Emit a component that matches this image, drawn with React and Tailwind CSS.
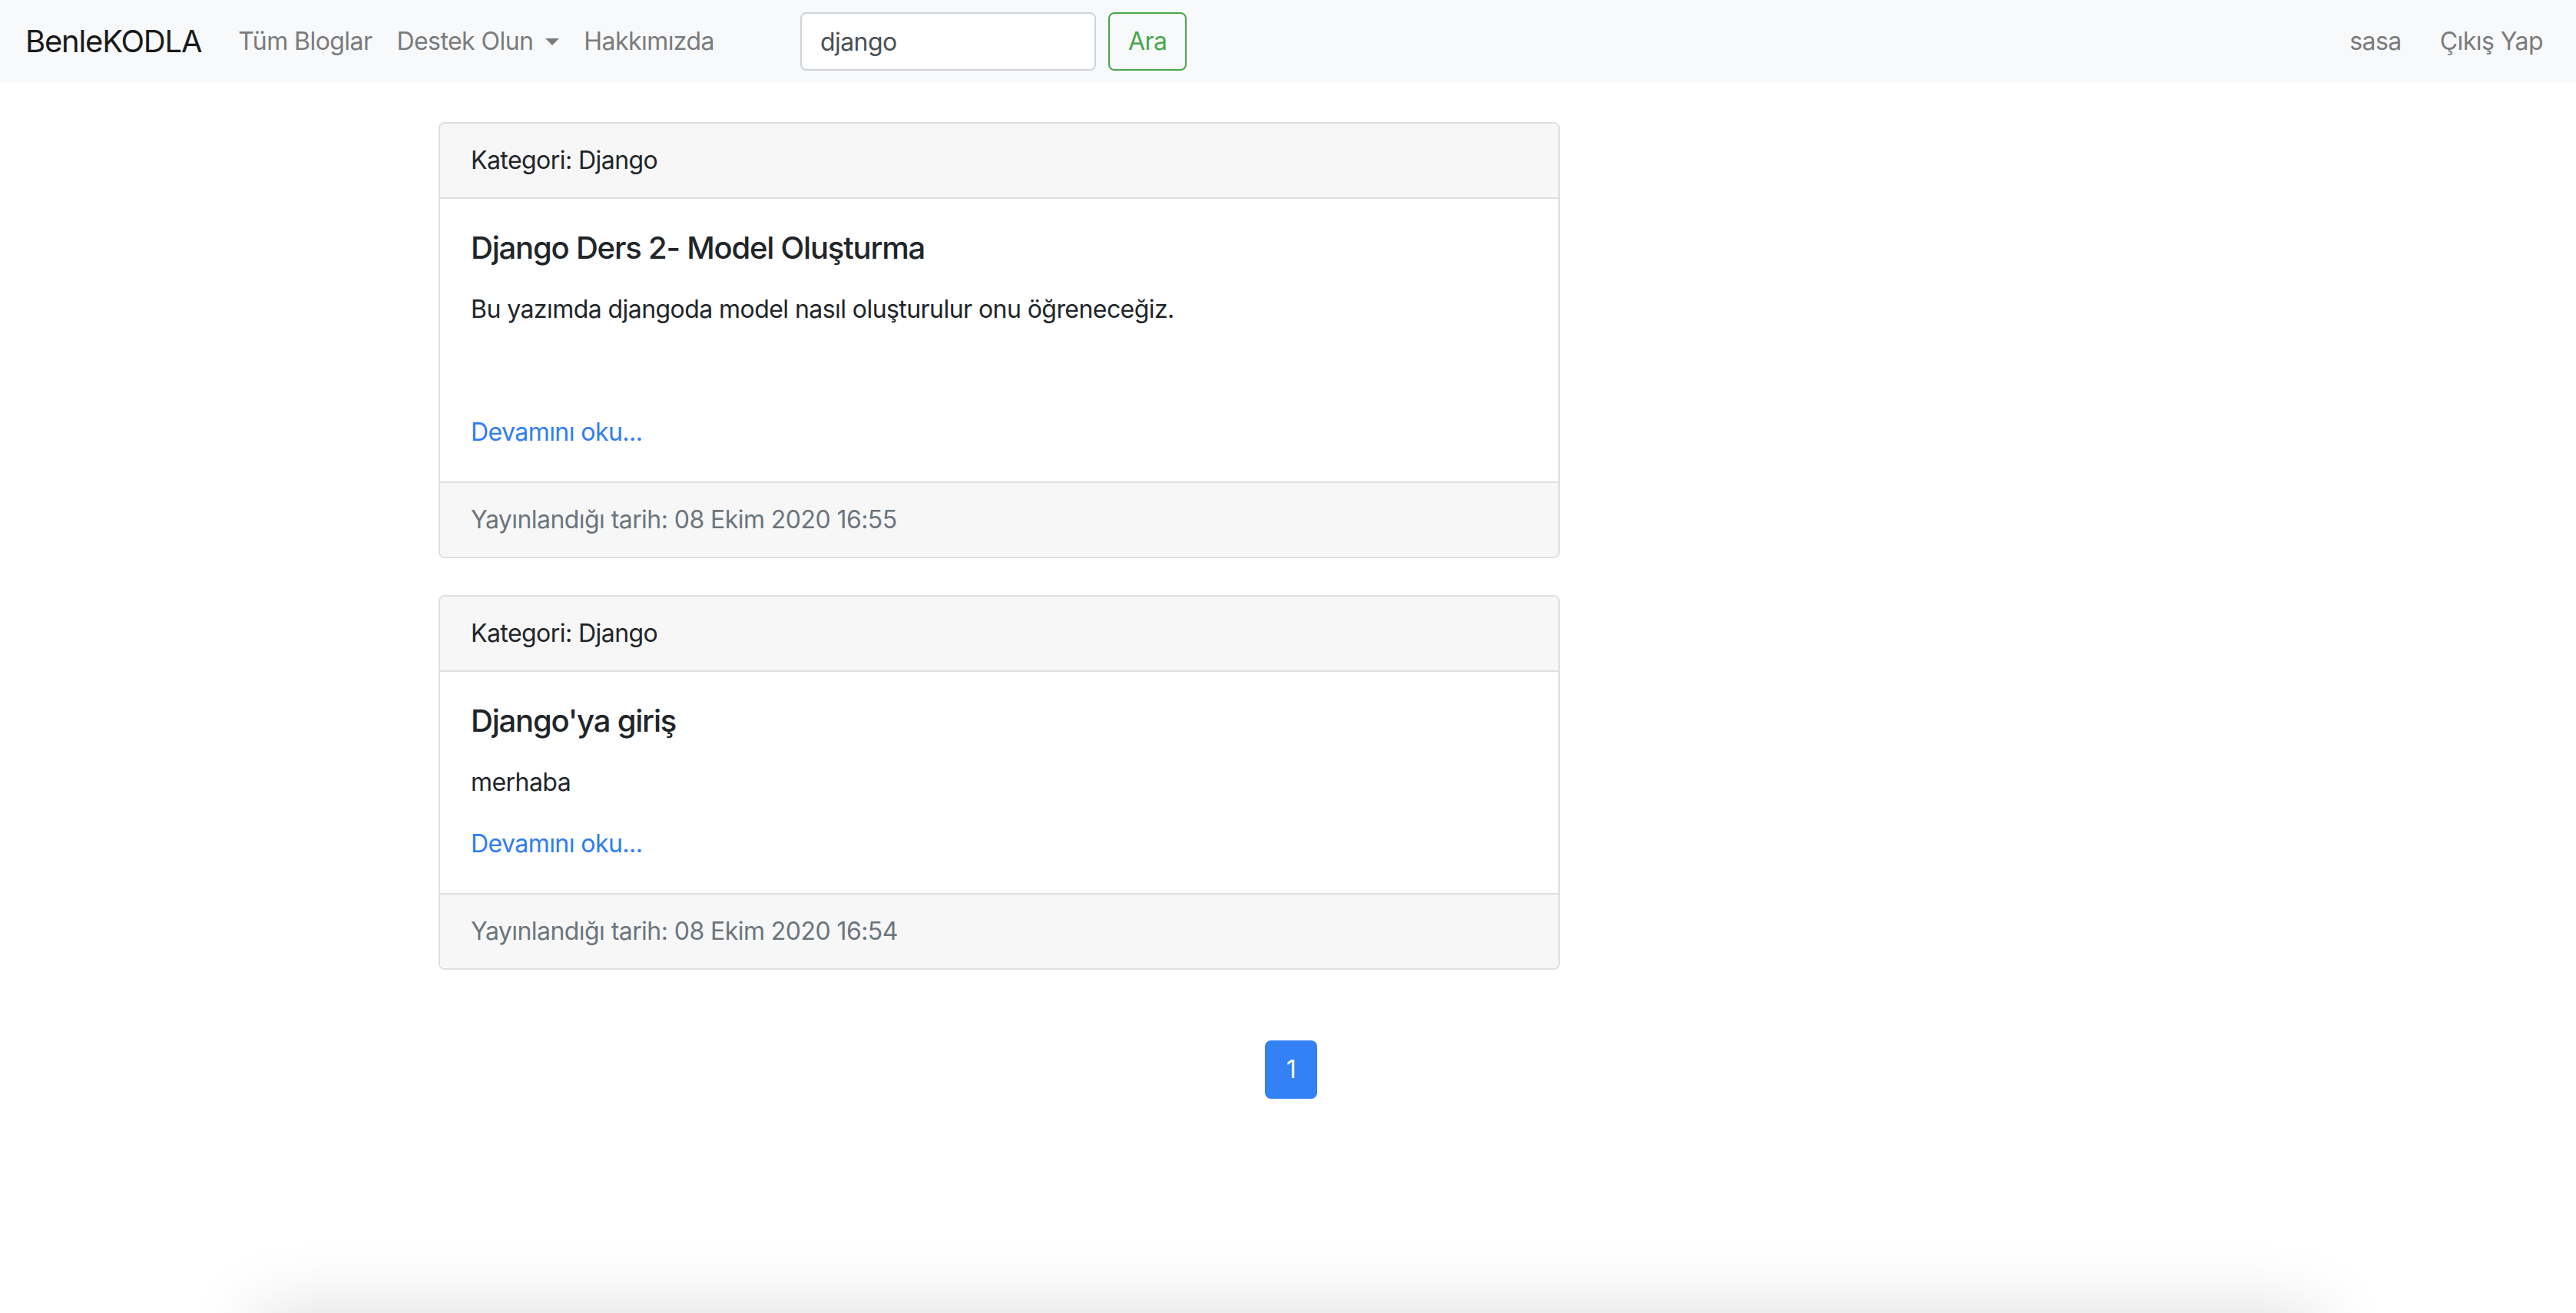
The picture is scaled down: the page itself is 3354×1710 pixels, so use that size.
const posts = [
  {
    title: "Django Ders 2- Model Oluşturma",
    body: "Bu yazımda djangoda model nasıl oluşturulur onu öğreneceğiz.",
    extra: true,
    date: "08 Ekim 2020 16:55",
  },
  {
    title: "Django'ya giriş",
    body: "merhaba",
    extra: false,
    date: "08 Ekim 2020 16:54",
  },
];

function PostCard({ post }) {
  return (
    <div className="w-[1460px] mb-[48px] border-2 border-[#dfdfdf] rounded-[8px] overflow-hidden bg-white">
      {/* header */}
      <div className="bg-[#f7f7f7] border-b-2 border-[#dfdfdf] px-[40px] py-[24px] text-[32px] leading-[48px] text-[#212529]">
        Kategori: Django
      </div>

      {/* body */}
      <div className="p-[40px]">
        <h5 className="text-[40px] leading-[48px] font-medium tracking-[-0.03em] text-[#212529] mb-[32px]">
          {post.title}
        </h5>
        <p className="text-[32px] leading-[48px] text-[#212529] mb-[32px]">{post.body}</p>
        {post.extra && <p className="h-[48px] mb-[32px]">&nbsp;</p>}
        <a href="#" className="block text-[32px] leading-[48px] text-[#2e7cf6]">
          Devamını oku...
        </a>
      </div>

      {/* footer */}
      <div className="bg-[#f7f7f7] border-t-2 border-[#dfdfdf] px-[40px] py-[24px] text-[32px] leading-[48px] text-[#6c757d]">
        Yayınlandığı tarih: {post.date}
      </div>
    </div>
  );
}

export default function App() {
  return (
    <div className="h-[1710px] overflow-hidden bg-white tracking-[-0.035em] font-['Inter','Noto_Sans',sans-serif]">
      {/* NAVBAR */}
      <nav className="h-[108px] bg-[#f8f9fa] flex items-center pl-[33px] pr-[27px]">
        <a href="#" className="text-[40px] leading-[60px] tracking-[-0.03em] text-[#1a1a1a] mr-[32px]">
          BenleKODLA
        </a>
        <ul className="flex items-center text-[32px] leading-[48px] text-[#7b7b7c]">
          <li>
            <a href="#" className="px-[16px]">Tüm Bloglar</a>
          </li>
          <li>
            <a href="#" className="px-[16px] flex items-center">
              Destek Olun
              <span className="ml-[16px] w-0 h-0 border-l-[9px] border-r-[9px] border-t-[9px] border-l-transparent border-r-transparent border-t-[#7b7b7c]"></span>
            </a>
          </li>
          <li>
            <a href="#" className="px-[16px]">Hakkımızda</a>
          </li>
        </ul>

        <form className="flex items-center ml-[96px]">
          <input
            type="text"
            defaultValue="django"
            className="w-[385px] h-[76px] bg-white border-2 border-[#ced4da] rounded-[8px] px-[24px] text-[32px] text-[#495057] outline-none"
          />
          <button
            type="button"
            className="ml-[16px] h-[76px] px-[24px] border-2 border-[#46a74b] rounded-[8px] text-[32px] text-[#46a74b]"
          >
            Ara
          </button>
        </form>

        <ul className="ml-auto flex items-center gap-[18px] text-[32px] leading-[48px] text-[#7b7b7c]">
          <li>
            <a href="#" className="px-[16px]">sasa</a>
          </li>
          <li>
            <a href="#" className="px-[16px]">Çıkış Yap</a>
          </li>
        </ul>
      </nav>

      {/* CONTENT */}
      <main className="h-[1604px]">
        <div className="w-[2280px] mx-auto pl-[34px] pr-[26px] pt-[51px]">
          {posts.map((post, i) => (
            <PostCard key={i} post={post} />
          ))}

          <div className="flex justify-center mt-[92px]">
            <a
              href="#"
              className="w-[68px] h-[76px] flex items-center justify-center rounded-[8px] bg-[#3381f5] text-white text-[32px]"
            >
              1
            </a>
          </div>
        </div>
      </main>

      {/* footer just below the fold, only its shadow shows */}
      <footer className="w-[2680px] h-[300px] mx-auto bg-white shadow-[0_0_90px_rgba(0,0,0,0.15)]"></footer>
    </div>
  );
}
